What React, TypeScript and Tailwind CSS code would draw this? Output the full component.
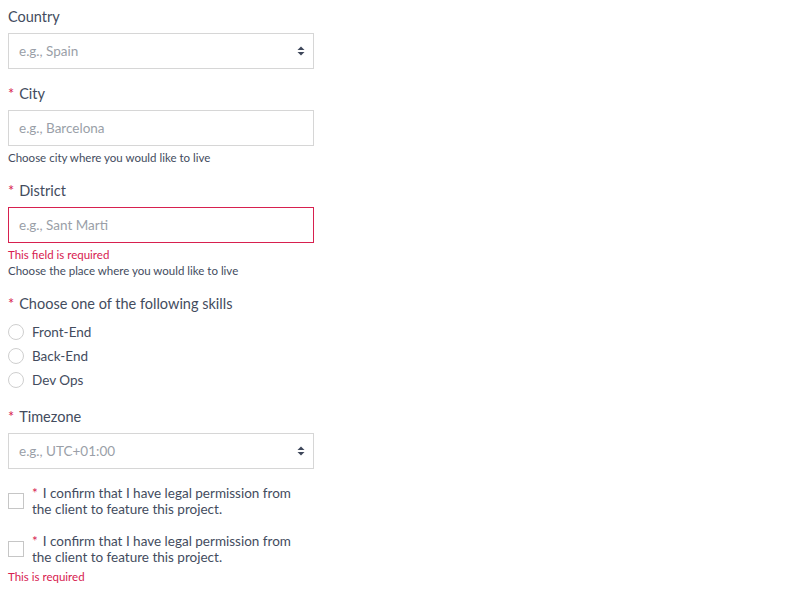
const label = 'block h-5 leading-5 text-[14.5px] text-[#434c5e] mb-[6px]';
const inputBase =
  'block w-full h-9 border bg-white px-[10px] text-[13.5px] text-[#434c5e] placeholder:text-[#9a9fa8] outline-none';

function Req() {
  return <span className="text-[#d7204f] mr-[5px]">*</span>;
}

function SelectArrows() {
  return (
    <svg width="8" height="10" viewBox="0 0 8 10" className="absolute right-[9px] top-1/2 -translate-y-1/2">
      <path d="M4 0.5 L7.5 4 L0.5 4 Z" fill="#3e475a" />
      <path d="M4 9.5 L7.5 6 L0.5 6 Z" fill="#3e475a" />
    </svg>
  );
}

function FakeSelect({ placeholder }: { placeholder: string }) {
  return (
    <div className="relative">
      <div className="flex items-center w-full h-9 border border-[#d6d6d6] bg-white px-[10px] pt-px text-[13.5px] text-[#9a9fa8]">
        {placeholder}
      </div>
      <SelectArrows />
    </div>
  );
}

function Radio({ text }: { text: string }) {
  return (
    <label className="flex items-center h-6 gap-2 text-[13.5px] text-[#434c5e]">
      <span className="w-4 h-4 rounded-full border border-[#cfcfcf] bg-white shrink-0" />
      {text}
    </label>
  );
}

function Confirm() {
  return (
    <label className="flex items-center gap-2 text-[13.5px] leading-4 text-[#434c5e]">
      <span className="w-4 h-4 border border-[#c6c6c6] bg-white shrink-0" />
      <span className="w-[268px]">
        <Req />I confirm that I have legal permission from the client to feature this project.
      </span>
    </label>
  );
}

export default function App() {
  return (
    <div
      className="min-h-screen bg-white px-2 pt-[7px]"
      style={{ fontFamily: 'Lato, "Open Sans", sans-serif' }}
    >
      <div className="w-[306px]">
        <div className="mb-[15px]">
          <div className={label}>Country</div>
          <FakeSelect placeholder="e.g., Spain" />
        </div>

        <div className="mb-[15px]">
          <div className={label}>
            <Req />City
          </div>
          <input className={`${inputBase} border-[#d6d6d6]`} placeholder="e.g., Barcelona" />
          <p className="mt-1 text-[11.5px] leading-4 text-[#434c5e]">Choose city where you would like to live</p>
        </div>

        <div className="mb-[15px]">
          <div className={label}>
            <Req />District
          </div>
          <input className={`${inputBase} border-[#d7204f]`} placeholder="e.g., Sant Marti" />
          <p className="mt-1 text-[11.5px] leading-4 text-[#d7204f]">This field is required</p>
          <p className="text-[11.5px] leading-4 text-[#434c5e]">Choose the place where you would like to live</p>
        </div>

        <div className="mb-[15px]">
          <div className={label}>
            <Req />Choose one of the following skills
          </div>
          <Radio text="Front-End" />
          <Radio text="Back-End" />
          <Radio text="Dev Ops" />
        </div>

        <div className="mb-4">
          <div className={label}>
            <Req />Timezone
          </div>
          <FakeSelect placeholder="e.g., UTC+01:00" />
        </div>

        <div className="mb-4">
          <Confirm />
        </div>

        <div>
          <Confirm />
          <p className="mt-1 text-[11.5px] leading-4 text-[#d7204f]">This is required</p>
        </div>
      </div>
    </div>
  );
}
